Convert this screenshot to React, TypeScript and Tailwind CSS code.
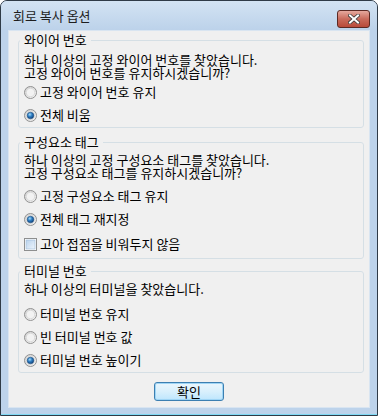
import type { ReactNode } from "react";

function Radio({ checked }: { checked?: boolean }) {
    return (
        <svg width="13" height="13" viewBox="0 0 13 13" className="shrink-0">
            <defs>
                <linearGradient id="rbg" x1="0" y1="0" x2="1" y2="1">
                    <stop offset="0" stopColor="#cfcfcf" />
                    <stop offset="1" stopColor="#f7f7f7" />
                </linearGradient>
                <radialGradient id="rdot" cx="0.4" cy="0.35" r="0.7">
                    <stop offset="0" stopColor="#a9dcf8" />
                    <stop offset="0.45" stopColor="#2f7fc4" />
                    <stop offset="1" stopColor="#0d3a73" />
                </radialGradient>
            </defs>
            <circle cx="6.5" cy="6.5" r="6" fill="url(#rbg)" stroke="#929292" />
            <circle cx="6.5" cy="6.5" r="4.2" fill="#f2f2f2" stroke="#d6d6d6" strokeWidth="0.8" />
            {checked && <circle cx="6.5" cy="6.5" r="3.3" fill="url(#rdot)" stroke="#1f4f80" strokeWidth="0.6" />}
        </svg>
    );
}

function Checkbox() {
    return (
        <svg width="13" height="13" viewBox="0 0 13 13" className="shrink-0">
            <defs>
                <linearGradient id="cbg" x1="0" y1="0" x2="1" y2="1">
                    <stop offset="0" stopColor="#b9d2ec" />
                    <stop offset="1" stopColor="#eef5fc" />
                </linearGradient>
            </defs>
            <rect x="0.5" y="0.5" width="12" height="12" fill="#fff" stroke="#8e8f8f" />
            <rect x="2" y="2" width="9" height="9" fill="url(#cbg)" stroke="#9cb8d6" strokeWidth="0.6" />
        </svg>
    );
}

function Option({ children, checked, box, className }: { children: ReactNode; checked?: boolean; box?: boolean; className: string }) {
    return (
        <div className={`flex h-[16px] items-center gap-[3px] pl-[5px] ${className}`}>
            {box ? <Checkbox /> : <Radio checked={checked} />}
            <span className="leading-[16px]">{children}</span>
        </div>
    );
}

function Group({ title, children, className }: { title: string; children: ReactNode; className: string }) {
    return (
        <fieldset className={`ml-[9px] w-[346px] rounded-[3px] border border-[#d5dfe5] ${className}`}>
            <legend className="ml-[1px] px-[4px] leading-[14px]">{title}</legend>
            {children}
        </fieldset>
    );
}

export default function App() {
    return (
        <div className="h-[416px] w-[378px] overflow-hidden rounded-t-[7px] border border-[#2f3b47] bg-[#bdd3eb] font-['Noto_Sans_CJK_KR',sans-serif] text-[13px] text-black">
            <div className="relative flex h-[29px] items-center bg-gradient-to-b from-[#d3e3f3] to-[#bcd2ea] pl-[12px]">
                <span className="leading-[14px] text-[#1e1e1e]">회로 복사 옵션</span>
                <div className="absolute right-[7px] top-[9px] flex h-[18px] w-[33px] items-center justify-center rounded-[3px] border border-[#5c2a24] bg-gradient-to-b from-[#e6a99e] via-[#c96b5c] to-[#b84a3a]">
                    <svg width="12" height="10" viewBox="0 0 12 10">
                        <path d="M2 1.5 L10 8.5 M10 1.5 L2 8.5" stroke="#3b3b3b" strokeWidth="3.6" strokeLinecap="square" />
                        <path d="M2 1.5 L10 8.5 M10 1.5 L2 8.5" stroke="#fff" strokeWidth="2" strokeLinecap="square" />
                    </svg>
                </div>
            </div>
            <div className="ml-[7px] h-[378px] w-[362px] border border-[#d9e5f1] bg-[#f0f0f0]">
                <Group title="와이어 번호" className="mt-[2px] pb-[4px]">
                    <div className="mt-[6px] pl-[5px] leading-[13px]">
                        <p>하나 이상의 고정 와이어 번호를 찾았습니다.</p>
                        <p>고정 와이어 번호를 유지하시겠습니까?</p>
                    </div>
                    <Option className="mt-[5px]">고정 와이어 번호 유지</Option>
                    <Option checked className="mt-[7px]">전체 비움</Option>
                </Group>
                <Group title="구성요소 태그" className="mt-[7px] pb-[6px]">
                    <div className="mt-[4px] pl-[5px] leading-[13px]">
                        <p>하나 이상의 고정 구성요소 태그를 찾았습니다.</p>
                        <p>고정 구성요소 태그를 유지하시겠습니까?</p>
                    </div>
                    <Option className="mt-[9px]">고정 구성요소 태그 유지</Option>
                    <Option checked className="mt-[7px]">전체 태그 재지정</Option>
                    <Option box className="mt-[9px]">고아 접점을 비워두지 않음</Option>
                </Group>
                <Group title="터미널 번호" className="mt-[5px] pb-[4px]">
                    <p className="mt-[5px] pl-[5px] leading-[12px]">하나 이상의 터미널을 찾았습니다.</p>
                    <Option className="mt-[11px]">터미널 번호 유지</Option>
                    <Option className="mt-[7px]">빈 터미널 번호 값</Option>
                    <Option checked className="mt-[7px]">터미널 번호 높이기</Option>
                </Group>
                <div className="mt-[9px] flex justify-center">
                    <button className="h-[19px] w-[70px] rounded-[3px] border border-[#3c7fb1] bg-gradient-to-b from-[#eaf6fd] via-[#d9f0fc] to-[#bee6fd] leading-[16px] shadow-[inset_0_0_0_1px_#9fd5f5]">
                        확인
                    </button>
                </div>
            </div>
            <div className="mt-[6px] h-px bg-[#7fd9f4]" />
        </div>
    );
}
